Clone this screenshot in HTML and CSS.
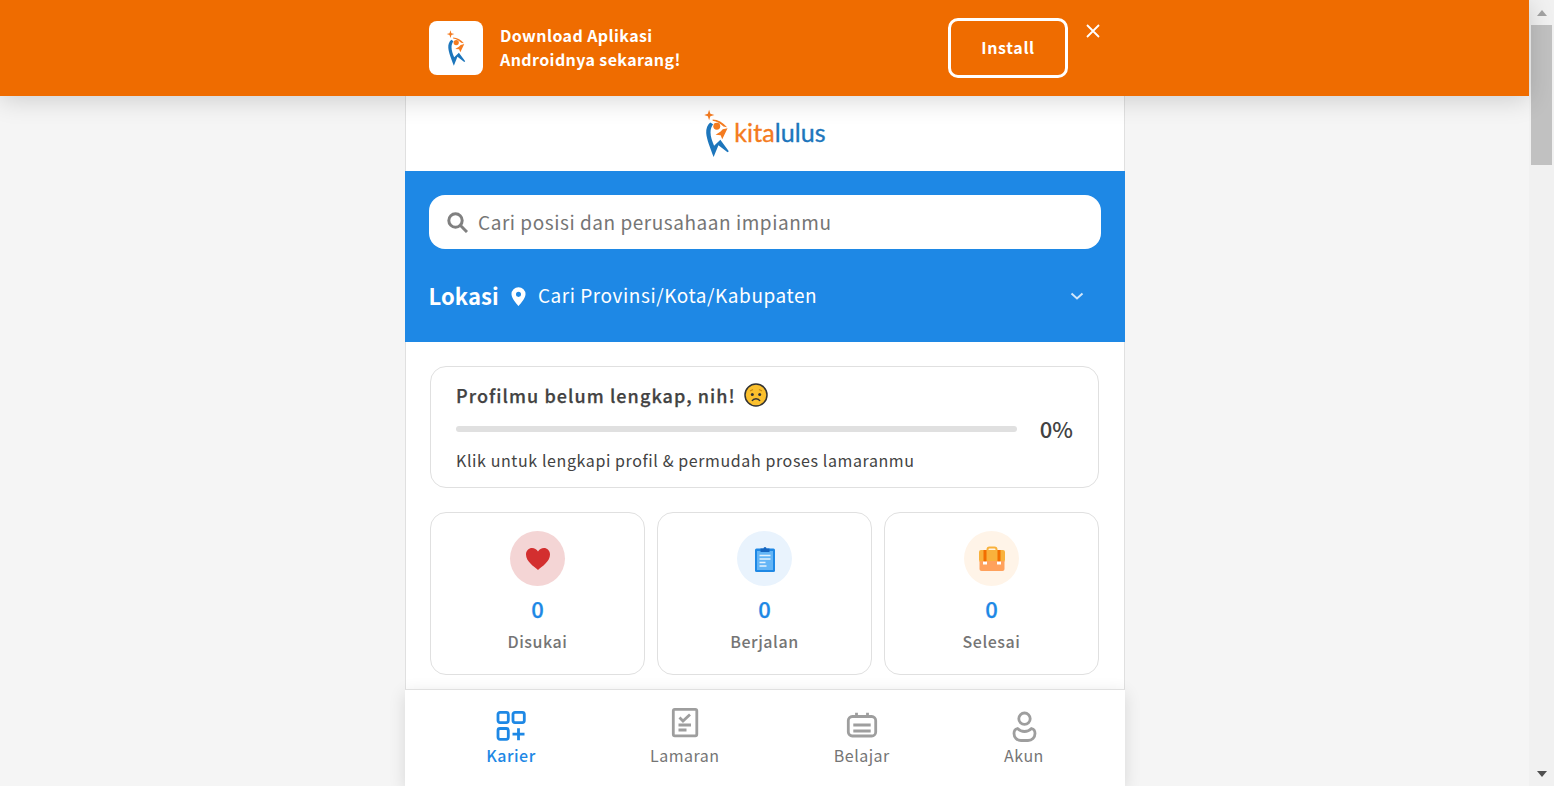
FILE: index.html
```html
<!DOCTYPE html>
<html lang="id">
<head>
<meta charset="utf-8">
<title>KitaLulus</title>
<link rel="stylesheet" href="styles.css">
</head>
<body>
<svg class="defs" width="0" height="0" aria-hidden="true">
  <symbol id="mark" viewBox="0 0 26 50">
    <path d="M5.300.2l1.300 4.200 4.200 1.300-4.200 1.300-1.300 4.200L4 7 .2 5.700 4 4.400z" fill="#f47b20"/>
    <path d="M6.500 13.500C3.500 16 2 20 2.300 24.500 2.700 31 6.500 40 10 49.500l5-12.300 9.500 7.200 1.300-1L17 31.500l-6.500 6.300C8.500 33 6.800 28.500 6.800 24c0-3.500 1-6 2.700-8.500z" fill="#1d76bc"/>
    <path d="M9 10.500c5.500.2 10.500 2.800 15 8l-3.800-.8C17 14.500 13.500 12.500 9 11.700z" fill="#f47b20"/>
    <circle cx="13.300" cy="17.500" r="3.600" fill="#f47b20"/>
    <path d="M24.500 19.500L19 31l-1.700-4.300-5.300-.4 5-3 2.500-2.600z" fill="#f47b20"/>
  </symbol>
</svg>

<div class="viewport">
  <header class="banner">
    <div class="banner-inner">
      <div class="app-icon"><svg class="app-mark"><use href="#mark"/></svg></div>
      <p class="banner-text">Download Aplikasi<br>Androidnya sekarang!</p>
      <button class="install">Install</button>
      <svg class="close" viewBox="0 0 14 14"><path d="M1 1l12 12M13 1L1 13"/></svg>
    </div>
  </header>

  <main class="phone">
    <div class="logo-bar">
      <svg class="logo-mark"><use href="#mark"/></svg>
      <span class="logo-text"><span class="logo-kita">kita</span><span class="logo-lulus">lulus</span></span>
    </div>

    <section class="hero">
      <div class="search">
        <svg class="search-icon" viewBox="0 0 21 21"><circle cx="8.500" cy="8.500" r="6.700"/><path d="M13.500 13.500L20 20"/></svg>
        <span class="search-text">Cari posisi dan perusahaan impianmu</span>
      </div>
      <div class="location">
        <strong class="loc-label">Lokasi</strong>
        <svg class="pin" viewBox="0 0 16 20"><path fill-rule="evenodd" d="M8 0a7.500 7.500 0 0 0-7.500 7.500C.5 12.500 8 20 8 20s7.500-7.500 7.500-12.500A7.500 7.500 0 0 0 8 0zm0 5a2.700 2.700 0 1 1 0 5.400A2.700 2.700 0 0 1 8 5z"/></svg>
        <span class="loc-value">Cari Provinsi/Kota/Kabupaten</span>
        <svg class="chevron" viewBox="0 0 14 8"><path d="M1.500 1.500L7 6.500l5.500-5"/></svg>
      </div>
    </section>

    <section class="content">
      <article class="card profile">
        <h2 class="profile-title">Profilmu belum lengkap, nih!
          <svg class="emoji" viewBox="0 0 24 24"><circle cx="12" cy="12" r="11" fill="#fbc02d" stroke="#333" stroke-width="1.500"/><circle cx="8.300" cy="11.500" r="1.500" fill="#333"/><circle cx="15.700" cy="11.500" r="1.500" fill="#333"/><path d="M8 18c1.500-3 6.500-3 8 0" fill="none" stroke="#333" stroke-width="1.500"/><path d="M6 8l3-1.500M18 8l-3-1.500" stroke="#c98a10" stroke-width="1.200"/></svg>
        </h2>
        <div class="progress-row">
          <div class="progress"></div>
          <span class="percent">0%</span>
        </div>
        <p class="profile-hint">Klik untuk lengkapi profil &amp; permudah proses lamaranmu</p>
      </article>

      <div class="stats">
        <article class="card stat">
          <div class="badge badge-red">
            <svg class="stat-icon" viewBox="0 0 26 24"><path d="M13 23C9 19.500 1 14.500 1 7.500 1 3.500 4 1 7 1c2.500 0 4.700 1.300 6 3.500C14.300 2.300 16.500 1 19 1c3 0 6 2.500 6 6.500C25 14.500 17 19.500 13 23z" fill="#d32f2f"/></svg>
          </div>
          <span class="stat-num">0</span>
          <span class="stat-label">Disukai</span>
        </article>
        <article class="card stat">
          <div class="badge badge-blue">
            <svg class="stat-icon" viewBox="0 0 26 26"><rect x="3" y="2.500" width="20" height="23.500" rx="1.500" fill="#1e88e5"/><rect x="5" y="5" width="16" height="19" fill="#64b5f6"/><path d="M8.500 2.500h3a1.500 1.500 0 0 1 3 0h3v3.500h-9z" fill="#1565c0"/><path d="M7.500 9.500h11M7.500 13h11M7.500 16.500h6M7.500 20h7" stroke="#e3f2fd" stroke-width="1.500"/></svg>
          </div>
          <span class="stat-num">0</span>
          <span class="stat-label">Berjalan</span>
        </article>
        <article class="card stat">
          <div class="badge badge-orange">
            <svg class="stat-icon stat-icon-wide" viewBox="0 0 28 26"><path d="M9.500 5V3.500A2 2 0 0 1 11.500 1.500h5a2 2 0 0 1 2 2V5" fill="none" stroke="#f9b13c" stroke-width="2"/><rect x="1" y="4" width="26" height="12" rx="2" fill="#f9b13c"/><path d="M1.500 15h25v8a2 2 0 0 1-2 2h-21a2 2 0 0 1-2-2z" fill="#ffa15c"/><rect x="5.500" y="4" width="3" height="14" fill="#f26e00"/><rect x="19.500" y="4" width="3" height="14" fill="#f26e00"/><rect x="5" y="15.500" width="4" height="3" fill="#fff"/><rect x="19" y="15.500" width="4" height="3" fill="#fff"/></svg>
          </div>
          <span class="stat-num">0</span>
          <span class="stat-label">Selesai</span>
        </article>
      </div>
    </section>

    <nav class="bottom-nav">
      <a class="nav-item active">
        <svg class="nav-icon" viewBox="0 0 32 32"><rect x="3" y="3.300" width="10.300" height="10.300" rx="2"/><rect x="18" y="3.300" width="11.300" height="10.300" rx="2"/><rect x="3" y="19.500" width="10.300" height="10.800" rx="2"/><path d="M17.500 25.200h12M23.500 19.200v12"/></svg>
        <span>Karier</span>
      </a>
      <a class="nav-item">
        <svg class="nav-icon" viewBox="0 0 32 32"><rect x="4.300" y=".3" width="23.500" height="26.500" rx="1.500"/><path d="M10.500 8.500l3.500 3.500 7-6.500M9.500 16h12.500M9.500 21h8"/></svg>
        <span>Lamaran</span>
      </a>
      <a class="nav-item">
        <svg class="nav-icon" viewBox="0 0 32 32"><rect x="2.300" y="7.500" width="27.400" height="19.500" rx="4"/><path d="M10.500 3.700v5M21.500 3.700v5M7.300 16h17.400M7.300 22h17.400"/></svg>
        <span>Belajar</span>
      </a>
      <a class="nav-item">
        <svg class="nav-icon" viewBox="0 0 32 32"><circle cx="16.500" cy="9.700" r="5.700"/><path d="M9.500 19.500c2 2 4.500 3 7 3s5-1 7-3c2.500.5 3.500 2.500 3.500 5 0 4-3 7-7 7h-7c-4 0-7-3-7-7 0-2.500 1-4.500 3.500-5z"/></svg>
        <span>Akun</span>
      </a>
    </nav>
  </main>
</div>

<aside class="scrollbar" aria-hidden="true">
  <span class="arrow-up"></span>
  <span class="thumb"></span>
  <span class="arrow-down"></span>
</aside>
</body>
</html>
```
FILE: styles.css
```css
* { box-sizing: border-box; }
html, body { margin: 0; height: 786px; overflow: hidden; }
body {
  display: flex;
  background: #f5f5f5;
  font-family: "Noto Sans CJK JP", "Noto Sans", sans-serif;
  color: #424242;
}
.defs { position: absolute; }
.viewport { flex: 1; min-width: 0; display: flex; flex-direction: column; height: 786px; }

.banner {
  position: relative;
  z-index: 2;
  flex: none;
  height: 96px;
  background: #ef6c00;
  box-shadow: 0 4px 24px rgba(0, 0, 0, .16);
}
.banner-inner {
  width: 720px;
  height: 96px;
  margin-left: 405px;
  padding: 0 24px;
  display: flex;
  align-items: center;
  color: #fff;
}
.app-icon {
  width: 54px; height: 54px;
  border-radius: 8px;
  background: #fff;
  display: flex; align-items: center; justify-content: center;
  flex: none;
}
.app-mark { width: 20px; height: 36px; }
.banner-text {
  margin: 0 0 2px 17px;
  font-size: 16px;
  line-height: 24px;
  font-weight: 700;
  letter-spacing: .4px;
  width: 448px;
}
.install {
  width: 120px; height: 60px;
  padding: 0 0 2px;
  border: 3px solid #fff;
  border-radius: 10px;
  background: transparent;
  color: #fff;
  font: 700 16px "Noto Sans CJK JP", sans-serif;
  letter-spacing: .65px;
  flex: none;
}
.close {
  width: 14px; height: 14px;
  margin: -34px 0 0 18px;
  fill: none; stroke: #fff; stroke-width: 1.800;
  flex: none;
}

.phone {
  flex: 1;
  min-height: 0;
  width: 720px;
  margin-left: 405px;
  display: flex;
  flex-direction: column;
  background: #fff;
  border-left: 1px solid #e0e0e0;
  border-right: 1px solid #e0e0e0;
}
.logo-bar {
  height: 75px;
  flex: none;
  display: flex;
  align-items: center;
  justify-content: center;
  gap: 5px;
}
.logo-mark { width: 25px; height: 49px; }
.logo-text {
  margin-bottom: 3px;
  font-family: "Lato", sans-serif;
  font-size: 25px;
  letter-spacing: .1px;
  font-weight: 400;
  -webkit-text-stroke: .35px currentColor;
}
.logo-kita { color: #f47b20; }
.logo-lulus { color: #1d76bc; }

.hero {
  flex: none;
  height: 171px;
  margin: 0 -1px;
  padding: 24px 24px 0;
  background: #1e88e5;
  color: #fff;
}
.search {
  height: 54px;
  border-radius: 16px;
  background: #fff;
  display: flex;
  align-items: center;
  padding-left: 18px;
  gap: 10px;
  font-size: 19px;
  letter-spacing: .54px;
  color: #757575;
}
.search-text { padding-bottom: 2px; }
.search-icon { width: 21px; height: 21px; fill: none; stroke: #808080; stroke-width: 3; flex: none; }
.location {
  display: flex;
  align-items: center;
  height: 36px;
  margin-top: 28px;
}
.loc-label { margin-left: -.5px; font-size: 22px; font-weight: 700; letter-spacing: .1px; }
.pin { width: 15px; height: 19px; fill: #fff; margin: 2px 12px 0 12px; flex: none; }
.loc-value { padding-bottom: 2px; font-size: 19px; letter-spacing: .55px; flex: 1; }
.chevron { width: 14px; height: 8px; fill: none; stroke: #cfe6fb; stroke-width: 2; margin: 2px 17px 0 0; }

.content { flex: 1; min-height: 0; overflow: hidden; padding: 24px 25px 0 24px; }
.card { border: 1px solid #e0e0e0; border-radius: 16px; background: #fff; }
.profile { height: 122px; padding: 13px 25px 0; }
.profile-title {
  margin: 0;
  display: flex;
  align-items: center;
  gap: 8px;
  height: 30px;
  font-size: 18px;
  font-weight: 500;
  letter-spacing: 1.07px;
  -webkit-text-stroke: .25px currentColor;
}
.emoji { width: 24px; height: 24px; flex: none; }
.progress-row { display: flex; align-items: center; height: 36px; margin-top: 1px; }
.progress { width: 561px; height: 6px; border-radius: 3px; background: #e0e0e0; }
.percent { margin: 0 0 3px 23px; font-size: 22px; line-height: 30px; font-weight: 500; }
.profile-hint { margin: 1px 0 0; font-size: 16px; line-height: 24px; letter-spacing: .6px; }

.stats { display: flex; gap: 12px; margin-top: 24px; }
.stat {
  flex: 1;
  height: 163px;
  display: flex;
  flex-direction: column;
  align-items: center;
  padding-top: 18px;
}
.badge { width: 55px; height: 55px; border-radius: 50%; display: flex; align-items: center; justify-content: center; }
.badge-red { background: #f4d5d5; }
.badge-blue { background: #e9f3fd; }
.badge-orange { background: #fff4e8; }
.stat-icon { width: 26px; height: 26px; }
.stat-icon-wide { width: 28px; }
.stat-num { margin-top: 7px; font-size: 22px; line-height: 30px; font-weight: 500; -webkit-text-stroke: .25px currentColor; color: #1e88e5; }
.stat-label { margin-top: 3px; font-size: 16px; line-height: 30px; font-weight: 500; letter-spacing: .55px; color: #757575; }

.bottom-nav {
  position: relative;
  z-index: 1;
  flex: none;
  height: 97px;
  margin: 0 -1px;
  padding: 0 24px;
  display: flex;
  justify-content: space-around;
  background: #fff;
  border-top: 1px solid #e0e0e0;
  box-shadow: 0 4px 16px rgba(0, 0, 0, .12);
}
.nav-item {
  display: flex;
  flex-direction: column;
  align-items: center;
  padding-top: 19px;
  font-size: 16px;
  line-height: 24px;
  letter-spacing: .5px;
  color: #757575;
}
.nav-item.active { color: #1e88e5; font-weight: 500; }
.nav-icon { width: 32px; height: 32px; margin-bottom: 2px; overflow: visible; fill: none; stroke: #9e9e9e; stroke-width: 2.800; }
.active .nav-icon { stroke: #1e88e5; }

.scrollbar {
  flex: none;
  width: 25px;
  height: 786px;
  background: #f1f1f1;
  display: flex;
  flex-direction: column;
  align-items: center;
}
.arrow-up, .arrow-down { width: 0; height: 0; border-left: 5.500px solid transparent; border-right: 5.500px solid transparent; flex: none; }
.arrow-up { border-bottom: 6px solid #a3a3a3; margin-top: 10px; }
.thumb { width: 21px; height: 140px; margin-top: 9px; background: #c1c1c1; flex: none; }
.arrow-down { border-top: 6px solid #505050; margin-top: auto; margin-bottom: 9px; }
```
